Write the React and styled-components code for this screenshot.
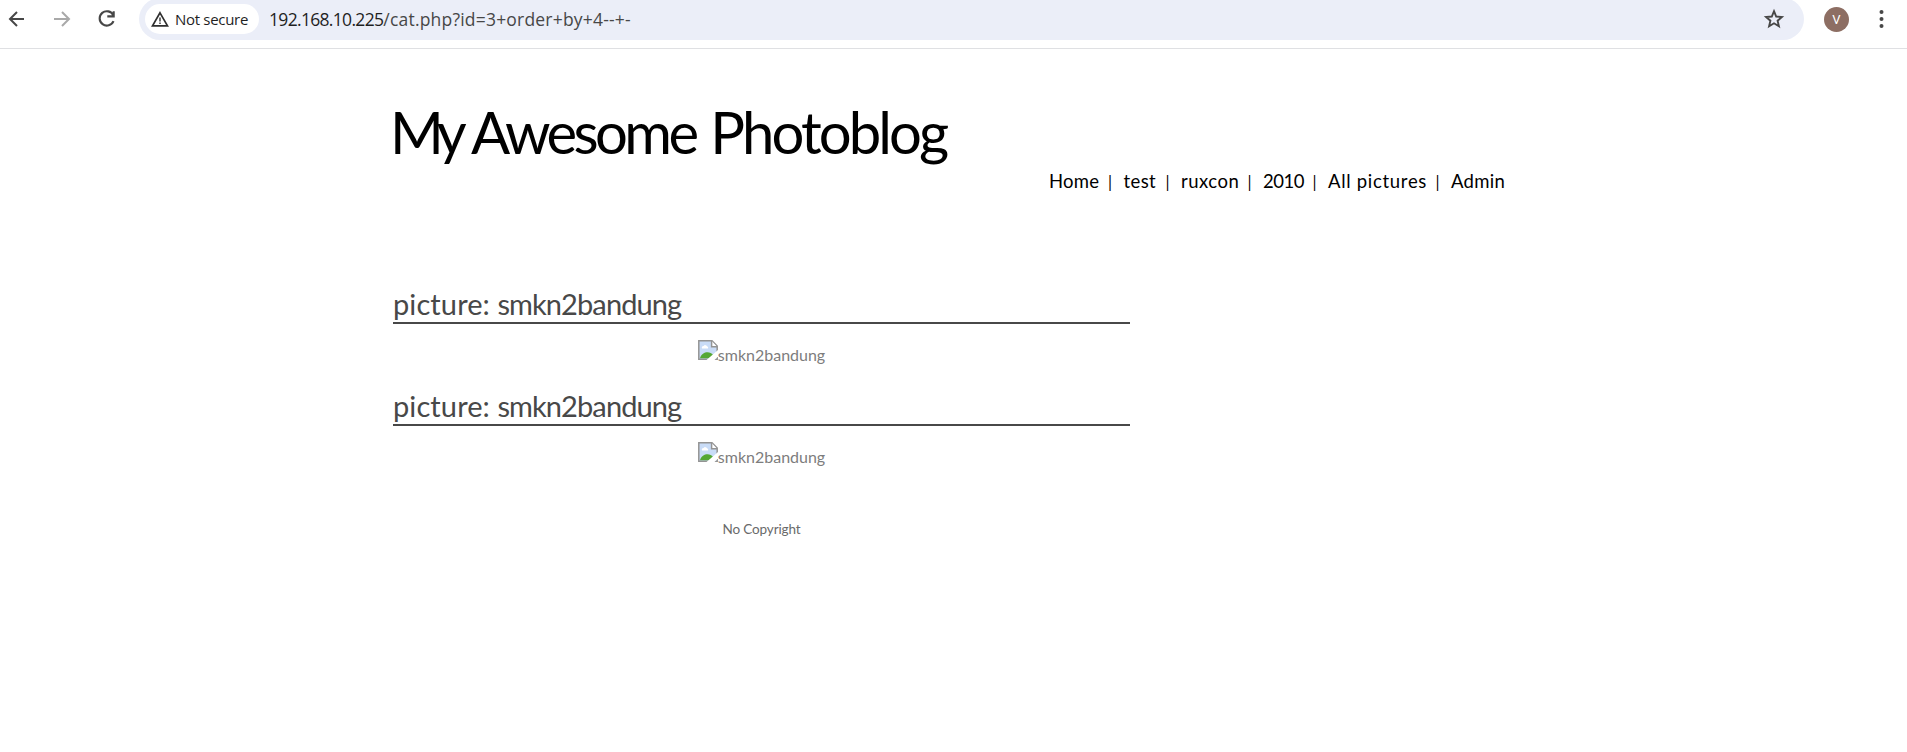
import React from "react";
import styled, { createGlobalStyle } from "styled-components";

const GlobalStyle = createGlobalStyle`
  * { box-sizing: border-box; }
  body { margin: 0; background: #fff; overflow: hidden; font-family: Lato, "Liberation Sans", sans-serif; }
  h1, h2, p { margin: 0; font-weight: 400; }
`;

const Toolbar = styled.header`
  display: flex;
  height: 49px;
  border-bottom: 1px solid #dfe0e3;
  overflow: hidden;
`;

const NavButtons = styled.div`
  display: flex;
  align-items: center;
  gap: 21px;
  width: 139px;
  height: 38px;
  padding-left: 5px;
`;

const Icon = styled.svg`
  display: block;
  flex: none;
  width: ${(p) => p.$size}px;
  height: ${(p) => p.$size}px;
`;

const AddressBar = styled.div`
  display: flex;
  align-items: center;
  width: 1665px;
  height: 42px;
  margin-top: -2px;
  padding: 0 18px 0 6px;
  border-radius: 21px;
  background: #ebeef8;
  font-family: "Open Sans", "Liberation Sans", sans-serif;
`;

const SecurityChip = styled.div`
  display: flex;
  align-items: center;
  gap: 5px;
  width: 114px;
  height: 30px;
  padding: 0 0 1px 5px;
  border-radius: 15px;
  background: #fff;
  color: #1f1f1f;
  font-size: 15px;
  letter-spacing: -0.3px;
  white-space: nowrap;
`;

const Url = styled.div`
  flex: 1;
  padding: 0 0 0 10px;
  color: #474747;
  font-size: 17.5px;
  line-height: 24px;
  letter-spacing: 0.2px;
  white-space: pre;
`;

const Host = styled.span`
  color: #1f1f1f;
  letter-spacing: -0.68px;
`;

const ProfileArea = styled.div`
  display: flex;
  align-items: center;
  height: 38px;
  padding-left: 20px;
  gap: 20px;
`;

const Avatar = styled.div`
  width: 25px;
  height: 25px;
  border-radius: 50%;
  background: #8d6e63;
  color: #fff;
  font: 13px/25px Roboto, sans-serif;
  text-align: center;
`;

const Page = styled.main`
  width: 1112px;
  margin-left: 393px;
`;

const Title = styled.h1`
  height: 119px;
  margin-left: -3px;
  padding-top: 48px;
  color: #000;
  font-size: 58px;
  line-height: 70px;
  white-space: nowrap;
`;

const Word = styled.span`
  margin-right: ${(p) => p.$gap || 0}px;
  letter-spacing: ${(p) => p.$spacing}px;
`;

const Menu = styled.nav`
  display: flex;
  justify-content: flex-end;
  height: 26px;
  color: #000;
  font-size: 18.5px;
  line-height: 26px;
`;

const MenuItem = styled.a`
  width: ${(p) => p.$width}px;
  letter-spacing: ${(p) => p.$spacing || 0}px;
  white-space: nowrap;
`;

const Divider = styled.span`
  width: 25px;
  padding-left: 7px;
  font-family: "Open Sans", sans-serif;
  font-size: 16.5px;
`;

const Content = styled.section`
  width: 737px;
  padding-top: 88px;
`;

const Picture = styled.article`
  height: 102px;
`;

const Heading = styled.h2`
  height: 42px;
  border-bottom: 2px solid #484848;
  color: #484848;
  font-size: 29px;
  line-height: 44px;
`;

const MissingImage = styled.div`
  display: flex;
  justify-content: center;
  padding-top: 16px;
  color: #7d7d7d;
  font-size: 16px;
  line-height: 29px;
`;

const Footer = styled.p`
  padding-top: 32px;
  color: #6a6a6a;
  font-size: 13.5px;
  line-height: 22px;
  letter-spacing: -0.12px;
  text-align: center;
`;

const BrokenImageIcon = () => (
  <Icon $size={20} viewBox="0 0 20 20">
    <path d="M.8.8H14L19.2 6V19.2H.8Z" fill="#c9dcf7" stroke="#949494" strokeWidth="1.5" />
    <path d="M4 8.5a2 2 0 0 1 1.6-2.6 2 2 0 0 1 3.4.4 1.6 1.6 0 0 1 1 2.2Z" fill="#fff" />
    <path d="M2 18.3c2-7 10-7.4 13-3.5l3 3.5Z" fill="#55a834" />
    <path d="M13.6 1v5.8H19" fill="#fff" stroke="#949494" strokeWidth="1.5" />
    <path d="M8.5 20 20 10v6.5L16.5 20Z" fill="#fff" />
  </Icon>
);

const links = [
  { label: "Home", width: 49.5, spacing: 0.2 },
  { label: "test", width: 32.5, spacing: 0.4 },
  { label: "ruxcon", width: 57, spacing: 0.5 },
  { label: "2010", width: 40, spacing: -0.5 },
  { label: "All pictures", width: 98, spacing: 0.7 },
  { label: "Admin", width: 54, spacing: 0.3 },
];

const pictures = ["smkn2bandung", "smkn2bandung"];

export default function App() {
  return (
    <>
      <GlobalStyle />
      <Toolbar>
        <NavButtons>
          <Icon $size={24} viewBox="0 0 24 24" fill="none" stroke="#474747" strokeWidth="2">
            <path d="M19 12H5.5M12 5l-7 7 7 7" />
          </Icon>
          <Icon $size={24} viewBox="0 0 24 24" fill="none" stroke="#a9a9a9" strokeWidth="2">
            <path d="M4 12h14.5M12 5l7 7-7 7" />
          </Icon>
          <Icon $size={24} viewBox="0 0 24 24" fill="none" stroke="#474747" strokeWidth="2.1">
            <path d="M18.3 8.2A7.2 7.2 0 1 0 18.5 14.2M18.7 4.2v5.2h-6.4" />
          </Icon>
        </NavButtons>
        <AddressBar>
          <SecurityChip>
            <Icon $size={20} viewBox="0 0 20 20" fill="none" stroke="#2f2f2f" strokeWidth="1.7">
              <path d="M10 3.8 17.5 16.8H2.5Z" />
              <path d="M10 8.4v4M10 13.6v1.5" strokeWidth="1.4" />
            </Icon>
            Not secure
          </SecurityChip>
          <Url>
            <Host>192.168.10.225</Host>/cat.php?id=3+order+by+4--+-
          </Url>
          <Icon $size={24} viewBox="0 0 24 24" fill="none" stroke="#474747" strokeWidth="1.9">
            <path d="m12 4.2 2.2 5.3 5.7.5-4.3 3.7 1.3 5.6-4.9-3-4.9 3 1.3-5.6L4.1 10l5.7-.5Z" />
          </Icon>
        </AddressBar>
        <ProfileArea>
          <Avatar>V</Avatar>
          <Icon $size={24} viewBox="0 0 24 24" fill="#474747">
            <circle cx="12.5" cy="5" r="2" />
            <circle cx="12.5" cy="12" r="2" />
            <circle cx="12.5" cy="19" r="2" />
          </Icon>
        </ProfileArea>
      </Toolbar>
      <Page>
        <Title>
          <Word $spacing={-6.5} $gap={-4}>My</Word>{" "}
          <Word $spacing={-3.6} $gap={0}>Awesome</Word>{" "}
          <Word $spacing={-2.9}>Photoblog</Word>
        </Title>
        <Menu>
          {links.map((link, i) => (
            <React.Fragment key={link.label}>
              {i > 0 && <Divider>|</Divider>}
              <MenuItem $width={link.width} $spacing={link.spacing}>{link.label}</MenuItem>
            </React.Fragment>
          ))}
        </Menu>
        <Content>
          {pictures.map((name, i) => (
            <Picture key={i}>
              <Heading>
                <Word $spacing={0.1}>picture:</Word>{" "}
                <Word $spacing={-0.9}>{name}</Word>
              </Heading>
              <MissingImage>
                <BrokenImageIcon />
                {name}
              </MissingImage>
            </Picture>
          ))}
          <Footer>No Copyright</Footer>
        </Content>
      </Page>
    </>
  );
}
